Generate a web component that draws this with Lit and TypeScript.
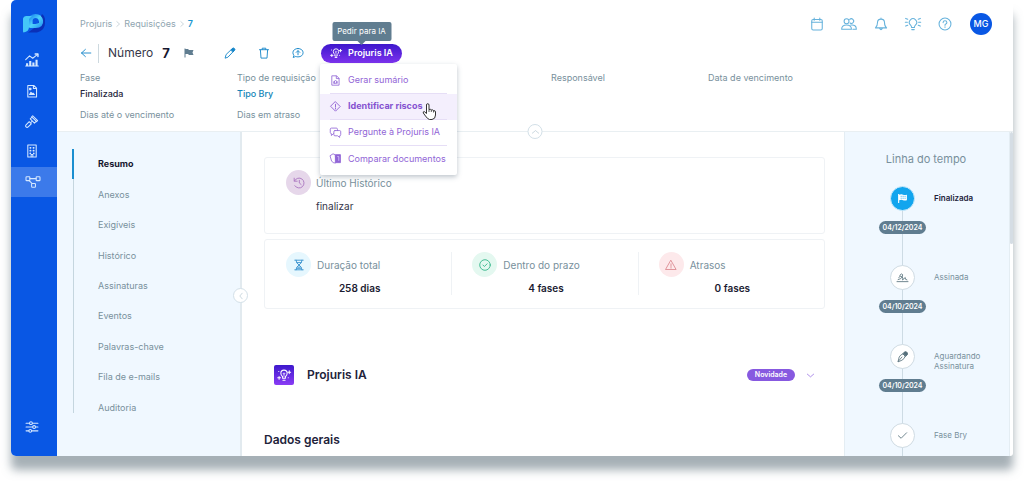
import { LitElement, html, css, svg, TemplateResult, SVGTemplateResult } from "lit";
import { customElement, property } from "lit/decorators.js";
import { classMap } from "lit/directives/class-map.js";

const icons: Record<string, SVGTemplateResult> = {
  chart: svg`<path d="M1 9.500 6.500 4l4.500 3.500L18 2" /><path stroke-width="2" d="M14.500 1.500H18.500V5" /><path stroke-width="3" stroke-linecap="butt" d="M3 18.500v-4M7.500 18.500v-7M12 18.500v-5M16.500 18.500v-9" /><path d="M1 18.500h18" />`,
  doc: svg`<path d="M4 2h8.500L16.500 6v12.500H4zM12 2v4.500h4.500" /><path fill="currentColor" d="m6.500 15 2-3 2 2 1-1 2 2h-7zM6.500 6h2v2h-2z" />`,
  gavel: svg`<path d="m11 2.500 7 7-1.500 1.500-7-7zM9.500 5 7.500 7l6 6 2-2M10.500 10l-2 2" /><path d="m6 11 3 3-4.500 4.500a2 2 0 0 1-3-3z" />`,
  building: svg`<path d="M4 1.500h12v17H4z" /><path stroke-width="2.400" d="M7.500 5.500h.5M12 5.500h.5M7.500 9.500h.5M12 9.500h.5M7.500 13.500h.1M12.500 13.500h.1" /><path d="M8.800 18v-3h2.400v3" />`,
  flow: svg`<rect x="0" y="2.500" width="5.500" height="5.500" rx="1" /><rect x="14.500" y="2.500" width="5.500" height="5.500" rx="1" /><rect x="8" y="12" width="5.500" height="5.500" rx="1" /><path d="M5.500 5.200h9M4.500 8l4 4" />`,
  sliders: svg`<path d="M1.500 4.500h5M10.500 4.500h8M1.500 10h9.500M15 10h3.500M1.500 15.500h4M9.500 15.500h9" /><circle cx="8.500" cy="4.500" r="2" /><circle cx="13" cy="10" r="2" /><circle cx="7.500" cy="15.500" r="2" />`,
  back: svg`<path d="M18 10H2.500M9 4l-6.500 6L9 16" />`,
  flag: svg`<path fill="currentColor" stroke="none" d="M1 1h2v1h5l2 2h9l-2 5 2 5H10l-2-2H3v7H1z" />`,
  flagDots: svg`<path fill="currentColor" stroke="none" d="M2 2h2v1q4-1.500 7 0t7 0v10q-4 1.500-7 0t-7 0v5H2z" /><path stroke="#12a5ee" stroke-dasharray="1.500 2" stroke-width="1" d="M7 6h9M7 9.500h9" />`,
  pencil: svg`<path d="m2 18 1.500-5.500L14 2.500q2-1.200 3.300.3T17 6L7 16.500z" /><path fill="currentColor" d="m12 4.500 2-2q2-1 3.300.3T17 6l-2 2z" />`,
  trash: svg`<path d="M2.500 4.500h15M7 4V2h6v2M4 5l1 13.500h10L16 5" />`,
  chat: svg`<path d="M10 2.500c5 0 8.500 3 8.500 7s-3.500 7-8.500 7q-2 0-3.800-.7L2 17.500l1.200-3.700Q1.500 12 1.500 9.500c0-4 3.500-7 8.500-7zM10 13V6.500M7 9l3-3 3 3" />`,
  spark: svg`<path d="M8 14.500v-2Q5.500 10.500 5.500 7.500a4.500 4.500 0 0 1 9 0q0 3-2.500 5v2zM8.500 17.500h3" /><path d="M10 12V7M8.500 7.500 10 9l1.500-1.500" stroke-width="1" /><path d="M17.500 4v4M15.500 6h4M3 12v4M1 14h4M2.500 5h.1M16 14h.1" />`,
  summary: svg`<path d="M4 1.500h8L16.500 6v12.500H4zM11.500 2v4.500H16M7 15v-3M13 15v-3M8 12a2 2 0 1 1 4 0v3H8z" />`,
  risk: svg`<path d="m10 1.500 8.500 8.500-8.500 8.500L1.500 10zM10 6v5M10 13v1.500" />`,
  chats: svg`<path d="M13.500 6.500V4q0-2-2-2H2.500Q.5 2 .5 4v6q0 2 2 2v3.500l4-3.500" /><path d="M9 6.500h8.500q2 0 2 2V14q0 2-2 2v3l-3.500-3H9q-2 0-2-2V8.500q0-2 2-2z" />`,
  compare: svg`<path d="M9 3 5.500 1.500 0 5l3 10 4 3h3z" /><path fill="currentColor" d="M10.500 3H19v14.500h-8.500z" /><path stroke="#d9c9ff" d="M14 6.500h2v7" />`,
  calendar: svg`<rect x="2.500" y="3.500" width="15" height="15" rx="2" /><path d="M2.500 7.500h15M6 1.500v3M14 1.500v3" />`,
  users: svg`<circle cx="6.500" cy="6" r="3.500" /><path d="M11 3.500a3.300 3.300 0 1 1 .5 5" /><path d="M-.5 17.500q0-6 7-6t7 6zM12.500 11.500q8-1 8 6h-5" />`,
  bell: svg`<path d="M2 15.500q3-2 3-7.500 0-5 5-5t5 5q0 5.500 3 7.500zM10 3V1.500M8 16q2 4 4 0" />`,
  bulb: svg`<path d="M8 15q0-2-1.700-3.700A5.200 5.200 0 1 1 13.700 11.300Q12 13 12 15zM8.200 18h3.600M-.5 2l3 1.300M-1 7.500h3M-.5 13l3-1.300M20.500 2l-3 1.300M21 7.500h-3M20.500 13l-3-1.300" />`,
  help: svg`<circle cx="10" cy="10" r="8.500" /><path d="M7.300 8q0-2.700 2.700-2.700T12.700 8q0 1.400-1.500 2T10 12M10 13.800v1" />`,
  history: svg`<path d="M2.500 6.500A8.300 8.300 0 1 1 3 14.500M2 2v5h5M10.500 5.500V10l3 2.500" />`,
  hourglass: svg`<path d="M3 2h14M3 18h14M5 2q0 5 5 8-5 3-5 8M15 2q0 5-5 8 5 3 5 8M6.500 6h7M7 15.500h6M8 13.500h4" />`,
  okay: svg`<circle cx="10" cy="10" r="8.800" /><path d="m6.500 10 2.500 2.500L13.500 8" />`,
  warn: svg`<path d="M10 2.500 18.500 17.500h-17zM10 8v4.500M10 14.200v1" />`,
  sign: svg`<path d="M0 17.500h20M2 14q6-1 8-6 1-4.500-1.500-4.500T5 7M3 10q3-3.500 6-1.500t1 6l5-4.500q-1 4 3 4.500" />`,
  pen: svg`<path d="m2 19 2-8q2-4 7-6l4 4q-1 5-5.500 7.500zM2.500 18.500 9 11" /><path fill="currentColor" d="m11 4.500 3-3h3l2 2v3l-3 3z" />`,
  check: svg`<path d="m2.500 10.500 5 4.500 10-10" />`,
  up: svg`<path d="m2 13 8-6.500 8 6.500" />`,
  down: svg`<path d="m3 7 7 6 7-6" />`,
  left: svg`<path d="m13 3-6 7 6 7" />`,
  right: svg`<path d="m6 2 9 8-9 8" />`,
};

@customElement("line-icon")
export class LineIcon extends LitElement {
  @property() name = "";
  static styles = css`
    :host { display: inline-flex; flex: none; width: 14px; height: 14px; }
    .glyph { width: 100%; height: 100%; overflow: visible; fill: none; stroke: currentColor; stroke-width: 1.5; stroke-linejoin: round; stroke-linecap: round; }
  `;
  render(): TemplateResult {
    return html`<svg class="glyph" viewBox="0 0 20 20" aria-hidden="true">${icons[this.name]}</svg>`;
  }
}

@customElement("app-root")
export class AppRoot extends LitElement {
  static styles = css`
    * { box-sizing: border-box; }
    :host { display: block; box-sizing: border-box; height: 100vh; padding: 0 11px 26px; overflow: hidden; background: #fff; font-family: Inter, "Open Sans", sans-serif; font-size: 9px; line-height: 12px; color: #78909c; }
    button { font: inherit; color: inherit; background: none; border: 0; padding: 0; display: inline-flex; align-items: center; justify-content: center; cursor: pointer; }
    a { color: inherit; text-decoration: none; }
    ul, ol, dl, dd, h1, h2, p { margin: 0; padding: 0; list-style: none; font: inherit; }
    .frame { display: flex; height: 100%; border-radius: 5px; background: #fff; box-shadow: 0 14px 10px rgba(92, 112, 122, 0.55); }

    .rail { display: flex; flex-direction: column; align-items: stretch; flex: none; width: 46px; background: #0957e4; color: #d5e8ff; border-radius: 5px 0 0 5px; padding: 12px 0 22px; }
    .logo { align-self: center; width: 24px; height: 22px; margin-bottom: 11px; }
    .modules { display: grid; grid-auto-rows: 1fr; height: 152px; }
    .module { display: flex; align-items: center; justify-content: center; height: 100%; padding-right: 4px; }
    .module.on { background: #3c7aea; padding-right: 2px; }
    .settings { margin-top: auto; padding-right: 4px; }

    .page { flex: 1; min-width: 0; display: flex; flex-direction: column; }
    .head { position: relative; flex: none; border-bottom: 1px solid #e9eff2; padding: 13px 21px 10px 23px; }
    .top { display: flex; align-items: center; height: 22px; }
    .crumbs { display: flex; align-items: center; gap: 3px; flex: 1; color: #8fa5b0; }
    .crumbs line-icon { width: 6px; height: 6px; }
    .crumbs .now { color: #1d96cf; font-weight: 600; }
    .tools { display: flex; align-items: center; gap: 18px; color: #66b2dc; }
    .tools line-icon { width: 14px; height: 14px; }
    .avatar { width: 22px; height: 22px; border-radius: 50%; background: #0957e4; color: #fff; font-weight: 500; }
    .title { display: flex; align-items: center; height: 20px; margin-top: 8px; color: #1385c8; }
    .back { padding-right: 6px; }
    .back line-icon { width: 12px; height: 12px; }
    .title h1 { display: flex; align-items: center; width: 76px; gap: 9px; border-left: 1px solid #cdd9df; padding-left: 9px; height: 19px; font-size: 12px; color: #37374a; box-sizing: content-box; }
    .title h1 strong { font-size: 13px; font-weight: 700; color: #16162e; }
    .title .flag { width: 10px; height: 10px; margin-right: 30px; color: #607d90; }
    .actions { display: flex; gap: 22px; }
    .actions line-icon { width: 12px; height: 12px; }
    .ask { position: relative; margin-left: 17px; }
    .pill { gap: 6px; height: 19px; width: 81px; border-radius: 10px; color: #fff; background: linear-gradient(#3d18cc, #7d32ee); font-weight: 600; }
    .pill line-icon { width: 12px; height: 12px; }
    .tip { position: absolute; z-index: 3; left: 50%; bottom: 22px; transform: translateX(-50%); width: 59px; padding: 4px 0; border-radius: 2px; background: #607d90; color: #fff; font-size: 8px; line-height: 11px; text-align: center; white-space: nowrap; }
    .tip::after { content: ""; position: absolute; left: 50%; top: 100%; margin-left: -4px; border: 4px solid transparent; border-top-color: #607d90; border-bottom: 0; }
    .menu { position: absolute; z-index: 2; top: 20px; left: -1px; width: 137px; border-radius: 2px; background: #fff; color: #9165d6; box-shadow: 0 2px 5px rgba(70, 90, 110, 0.35); }
    .options { padding: 4px 0 3px; }
    .options li { display: flex; height: 26px; padding: 0 10px; }
    .options li.hot { background: #f4effd; font-weight: 700; color: #8552d0; }
    .options button { flex: 1; justify-content: flex-start; gap: 7px; border-bottom: 1px solid #e6def6; white-space: nowrap; }
    .options li:last-child button { border-bottom: 0; }
    .menu line-icon { width: 11px; height: 11px; }
    .hand { position: absolute; top: 39px; right: 20px; width: 15px; height: 17px; }
    .facts { display: grid; grid-template-columns: repeat(5, 157px); margin-top: 9px; row-gap: 9px; }
    .facts dd { height: 12px; margin-top: 4px; color: #25253a; font-weight: 500; }
    .facts dd.link { color: #1385b8; }
    .round { position: absolute; width: 15px; height: 15px; border: 1px solid #d3e0e8; border-radius: 50%; background: #fff; color: #a9bfcb; }
    .round line-icon { width: 8px; height: 8px; }
    .fold { left: 50%; transform: translateX(-50%); bottom: -8px; }

    .body { flex: 1; min-height: 0; display: flex; }
    .side { position: relative; flex: none; width: 185px; padding: 17px 0 0 15px; background: #f0f8ff; border-right: 2px solid #e2eaef; }
    .sections { display: grid; grid-auto-rows: 1fr; height: 274px; background: linear-gradient(#c5d6df, #c5d6df) no-repeat 1px 0 / 1px calc(100% - 10px); }
    .sections a { display: flex; align-items: center; height: 100%; padding-left: 24px; border-left: 2px solid transparent; }
    .sections a.on { border-left-color: #1b8fd0; color: #16162e; font-weight: 700; }
    .hide { right: -8px; bottom: 153px; z-index: 1; }
    .main { flex: 1; min-width: 0; overflow: hidden; padding: 25px 19px 0 22px; }
    .card { border: 1px solid #eff2f5; border-radius: 3px; background: #fff; }
    .last { display: grid; grid-template-columns: 25px 1fr; column-gap: 5px; row-gap: 4px; height: 77px; align-content: start; align-items: center; padding: 12px 21px; font-size: 10px; }
    .last dd { grid-column: 2; color: #35354a; font-size: 10px; line-height: 14px; }
    .last dt { display: contents; }
    .bubble { display: flex; align-items: center; justify-content: center; flex: none; width: 25px; height: 25px; border-radius: 50%; }
    .bubble line-icon { width: 12px; height: 12px; }
    .lilac { background: #e6d7ea; color: #a974c0; }
    .sky { background: #e6f7fe; color: #3691ce; }
    .mint { background: #e4f8f0; color: #35b58a; }
    .rose { background: #fde9eb; color: #dc8b92; }
    .stats { display: grid; grid-template-columns: repeat(3, 1fr); height: 70px; margin-top: 5px; padding: 12px 0 13px; font-size: 10px; }
    .stat { padding-left: 20px; border-left: 1px solid #eff2f5; }
    .stat:first-child { border-left-color: transparent; }
    .stat dt { display: flex; align-items: center; gap: 6px; height: 25px; }
    .stat dd { margin: 5px 18px 0 0; color: #1c1c32; font-weight: 600; text-align: center; }
    .assist { display: flex; align-items: center; margin-top: 56px; padding: 0 10px; color: #22223a; font-size: 12px; font-weight: 600; }
    .tile { display: flex; align-items: center; justify-content: center; width: 20px; height: 20px; margin-right: 13px; border-radius: 2px; background: linear-gradient(#3d18cc, #8a3cf5); color: #fff; }
    .assist h2 { flex: 1; }
    .new { width: 48px; height: 12px; margin-right: 11px; border-radius: 6px; background: #8759e0; color: #fff; font-size: 7px; text-align: center; }
    .assist button { color: #8759e0; }
    .assist button line-icon { width: 9px; height: 9px; }
    .general { margin-top: 47px; color: #22223a; font-size: 12px; line-height: 16px; font-weight: 600; }

    .time { flex: none; width: 166px; overflow: hidden; padding: 19px 0 0; background: #f0f8ff; border-left: 1px solid #e4edf3; border-right: 1px solid #e4edf3; }
    .time h2 { font-size: 11px; line-height: 16px; text-align: center; padding-right: 2px; }
    .steps { margin-top: 19px; }
    .step { display: grid; grid-template-columns: 47px 1fr; column-gap: 8px; height: 79px; padding-left: 34px; font-size: 8px; line-height: 10px; }
    .track { display: flex; flex-direction: column; align-items: center; background: linear-gradient(#cddbe4, #cddbe4) no-repeat center / 1px 100%; }
    .node { display: flex; align-items: center; justify-content: center; width: 25px; height: 25px; border: 1px solid #cfdbe3; border-radius: 50%; background: #fff; color: #546e7a; }
    .node line-icon { width: 11px; height: 11px; }
    .when { width: 47px; height: 13px; margin-top: 10px; border-radius: 7px; background: #607d90; color: #fff; font-size: 7px; line-height: 13px; font-weight: 600; text-align: center; }
    .what { align-self: start; width: 60px; padding-top: 7px; }
    .step.done .node { border-color: #cdeafa; background: #12a5ee; color: #fff; }
    .step.done .what { color: #22223a; font-weight: 600; }
    .scroll { flex: none; width: 3px; background: #fff; border-radius: 0 0 5px 0; }
    .scroll i { display: block; height: 112px; background: #d5dde4; border-radius: 2px; }
  `;

  private modules = [["chart", "Indicadores"], ["doc", "Documentos"], ["gavel", "Processos"], ["building", "Empresas"], ["flow", "Requisições"]];
  private tools = [["calendar", "Agenda"], ["users", "Pessoas"], ["bell", "Avisos"], ["bulb", "Dicas"], ["help", "Ajuda"]];
  private menu = [["summary", "Gerar sumário"], ["risk", "Identificar riscos"], ["chats", "Pergunte à Projuris IA"], ["compare", "Comparar documentos"]];
  private sections = ["Resumo", "Anexos", "Exigíveis", "Histórico", "Assinaturas", "Eventos", "Palavras-chave", "Fila de e-mails", "Auditoria"];
  private stats = [["sky", "hourglass", "Duração total", "258 dias"], ["mint", "okay", "Dentro do prazo", "4 fases"], ["rose", "warn", "Atrasos", "0 fases"]];
  private steps = [["flagDots", "Finalizada", "04/12/2024"], ["sign", "Assinada", "04/10/2024"], ["pen", "Aguardando Assinatura", "04/10/2024"], ["check", "Fase Bry", ""]];

  private rail() {
    return html`<nav class="rail" aria-label="Módulos">
      <svg class="logo" viewBox="0 0 24 22" aria-hidden="true">
        <defs>
          <linearGradient id="bowl" x1="0" y1="0" x2="1" y2="1"><stop offset="0" stop-color="#1f8df2" /><stop offset=".5" stop-color="#4fd2fa" /><stop offset="1" stop-color="#2a9ff5" /></linearGradient>
        </defs>
        <path fill="#0a30b8" d="M6 20.500h9q8-2 8-9.500V7q0-3-3-5l-5 12z" />
        <path fill="none" stroke="url(#bowl)" stroke-width="4.200" stroke-linecap="round" d="M8.500 14V8.500Q9 4 13.500 4T19 8.800 13.500 14H9.500" />
        <path fill="#45c8f8" d="M1 6.500Q1.500 4 4 4h6L7 7v8q0 4.500-5.500 5.500Q1 20 1 19z" />
      </svg>
      <ul class="modules">
        ${this.modules.map(([icon, label], i) => html`<li><a href="#" aria-label=${label} class=${classMap({ module: true, on: i === 4 })}><line-icon name=${icon}></line-icon></a></li>`)}
      </ul>
      <button class="settings" aria-label="Configurações"><line-icon name="sliders"></line-icon></button>
    </nav>`;
  }

  private head() {
    return html`<header class="head">
      <div class="top">
        <nav class="crumbs" aria-label="Caminho">
          <a href="#">Projuris</a><line-icon name="right"></line-icon><a href="#">Requisições</a><line-icon name="right"></line-icon><span class="now">7</span>
        </nav>
        <div class="tools">
          ${this.tools.map(([icon, label]) => html`<button aria-label=${label}><line-icon name=${icon}></line-icon></button>`)}
          <button class="avatar">MG</button>
        </div>
      </div>
      <div class="title">
        <button class="back" aria-label="Voltar"><line-icon name="back"></line-icon></button>
        <h1>Número <strong>7</strong></h1>
        <line-icon class="flag" name="flag"></line-icon>
        <div class="actions">
          <button aria-label="Editar"><line-icon name="pencil"></line-icon></button>
          <button aria-label="Excluir"><line-icon name="trash"></line-icon></button>
          <button aria-label="Comentar"><line-icon name="chat"></line-icon></button>
        </div>
        <div class="ask">
          <div class="tip" role="tooltip">Pedir para IA</div>
          <button class="pill"><line-icon name="spark"></line-icon>Projuris IA</button>
          <div class="menu">
            <ul class="options">
              ${this.menu.map(([icon, label], i) => html`<li class=${classMap({ hot: i === 1 })}><button><line-icon name=${icon}></line-icon>${label}</button></li>`)}
            </ul>
            <svg class="hand" viewBox="0 0 15 17" aria-hidden="true"><path fill="#fff" stroke="#333" d="M4.500 10.500V2q0-1.300 1.200-1.300T7 2v4.500q2-.8 2.300.5 1.800-.7 2.200.7 2-.4 2 1.300v3q0 4-3.500 4.500H7.500Q5.500 16 3.500 13L1.300 10q-.5-1.500 1-1.400z" /><path stroke="#333" fill="none" stroke-width=".8" d="M7 6.500V9M9.300 7v2M11.500 7.700V9.500" /></svg>
          </div>
        </div>
      </div>
      <dl class="facts">
        <div><dt>Fase</dt><dd>Finalizada</dd></div>
        <div><dt>Tipo de requisição</dt><dd class="link">Tipo Bry</dd></div>
        <div></div>
        <div><dt>Responsável</dt></div>
        <div><dt>Data de vencimento</dt></div>
        <div><dt>Dias até o vencimento</dt></div>
        <div><dt>Dias em atraso</dt></div>
      </dl>
      <button class="round fold" aria-label="Recolher cabeçalho"><line-icon name="up"></line-icon></button>
    </header>`;
  }

  private content() {
    return html`<main class="main">
      <dl class="card last">
        <dt><span class="bubble lilac"><line-icon name="history"></line-icon></span><span>Último Histórico</span></dt>
        <dd>finalizar</dd>
      </dl>
      <div class="card stats">
        ${this.stats.map(([tone, icon, label, value]) => html`<dl class="stat"><dt><span class="bubble ${tone}"><line-icon name=${icon}></line-icon></span>${label}</dt><dd>${value}</dd></dl>`)}
      </div>
      <section class="assist">
        <span class="tile"><line-icon name="spark"></line-icon></span>
        <h2>Projuris IA</h2>
        <span class="new">Novidade</span>
        <button aria-label="Expandir"><line-icon name="down"></line-icon></button>
      </section>
      <h2 class="general">Dados gerais</h2>
    </main>`;
  }

  render() {
    return html`<div class="frame">
      ${this.rail()}
      <div class="page">
        ${this.head()}
        <div class="body">
          <nav class="side" aria-label="Seções">
            <ul class="sections">
              ${this.sections.map((s, i) => html`<li><a href="#" class=${classMap({ on: i === 0 })}>${s}</a></li>`)}
            </ul>
            <button class="round hide" aria-label="Recolher menu"><line-icon name="left"></line-icon></button>
          </nav>
          ${this.content()}
          <aside class="time">
            <h2>Linha do tempo</h2>
            <ol class="steps">
              ${this.steps.map(([icon, label, date], i) => html`<li class=${classMap({ step: true, done: i === 0 })}>
                <div class="track"><span class="node"><line-icon name=${icon}></line-icon></span>${date ? html`<time class="when">${date}</time>` : ""}</div>
                <span class="what">${label}</span>
              </li>`)}
            </ol>
          </aside>
          <div class="scroll"><i></i></div>
        </div>
      </div>
    </div>`;
  }
}
